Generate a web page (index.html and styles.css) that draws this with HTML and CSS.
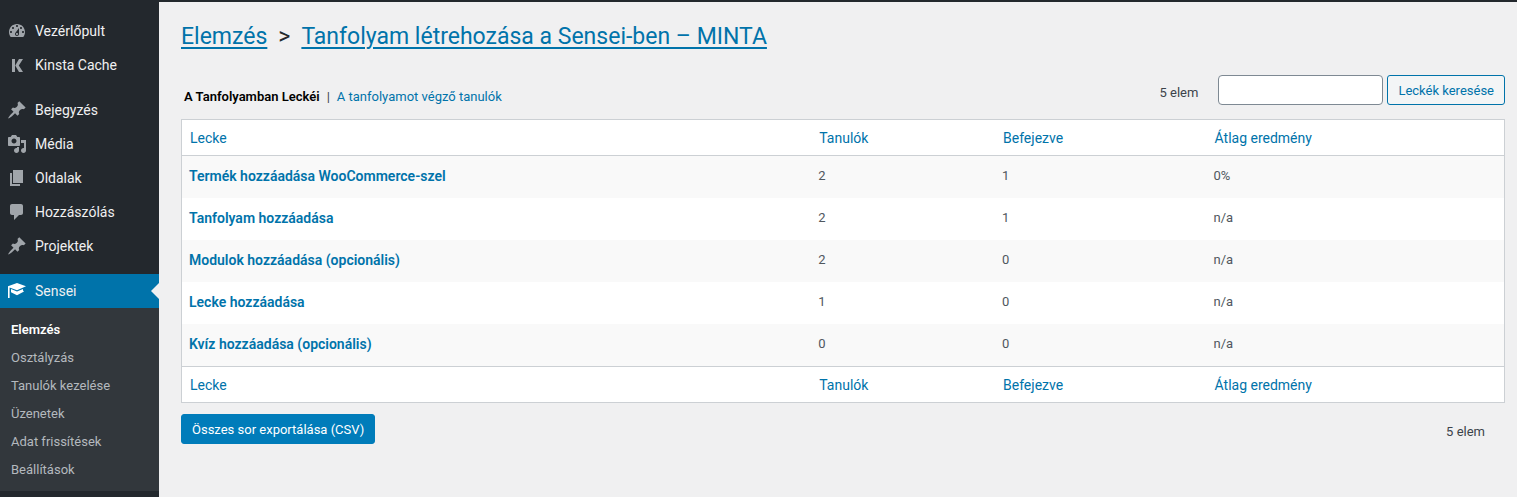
FILE: index.html
```
<!DOCTYPE html>
<html lang="hu">
<head>
    <meta charset="UTF-8">
    <title>Elemzés</title>
    <link rel="stylesheet" href="styles.css">
</head>
<body>
<svg class="sprite">
    <symbol id="pin" viewBox="0 0 20 20"><path d="M10.44 3.02l1.82-1.82 6.36 6.35-1.83 1.82c-1.05-.68-2.48-.57-3.41.36l-.75.75c-.92.93-1.04 2.35-.35 3.41l-1.83 1.82-2.41-2.41-2.8 2.79c-.42.42-3.38 2.71-3.8 2.29s1.86-3.39 2.28-3.81l2.79-2.79L4.1 9.36l1.83-1.82c1.05.69 2.48.57 3.4-.36l.75-.75c.93-.92 1.05-2.35.36-3.41z"/></symbol>
</svg>
<div class="topbar"></div>
<div class="wrap">
    <div class="sidebar">
        <ul class="menu">
            <li><a href="#">
                <svg class="icon" viewBox="0 0 20 20"><path fill-rule="evenodd" d="M3.76 16h12.48c1.1-1.37 1.76-3.11 1.76-5 0-4.42-3.58-8-8-8s-8 3.58-8 8c0 1.89.66 3.63 1.76 5zM10 4c.55 0 1 .45 1 1s-.45 1-1 1-1-.45-1-1 .45-1 1-1zM6 6c.55 0 1 .45 1 1s-.45 1-1 1-1-.45-1-1 .45-1 1-1zm8 0c.55 0 1 .45 1 1s-.45 1-1 1-1-.45-1-1 .45-1 1-1zm-5.37 5.55L12 7v6c0 1.1-.9 2-2 2s-2-.9-2-2c0-.57.24-1.08.63-1.45zM4 10c.55 0 1 .45 1 1s-.45 1-1 1-1-.45-1-1 .45-1 1-1zm12 0c.55 0 1 .45 1 1s-.45 1-1 1-1-.45-1-1 .45-1 1-1zm-5 3c0-.55-.45-1-1-1s-1 .45-1 1 .45 1 1 1 1-.45 1-1z"/></svg>
                Vezérlőpult</a></li>
            <li><a href="#">
                <svg class="icon" viewBox="0 0 20 20"><path d="M5 4h3v13H5zM12 4h4l-4.200 6.500L16 17h-4l-3.800-6.500z"/></svg>
                Kinsta Cache</a></li>
            <li class="group"><a href="#">
                <svg class="icon"><use href="#pin"/></svg>
                Bejegyzés</a></li>
            <li><a href="#">
                <svg class="icon" viewBox="0 0 20 20"><path fill-rule="evenodd" d="M13 11V4c0-.55-.45-1-1-1h-1.67L9 1H5L3.67 3H2c-.55 0-1 .45-1 1v7c0 .55.45 1 1 1h10c.55 0 1-.45 1-1zM7 4.5c1.38 0 2.5 1.12 2.5 2.5S8.38 9.5 7 9.5 4.5 8.38 4.5 7 5.62 4.5 7 4.5zM14 6h5v10.5c0 1.38-1.12 2.5-2.5 2.5S14 17.88 14 16.5s1.12-2.5 2.5-2.5c.17 0 .34.02.5.05V9h-3V6zm-4 8.05V13h2v3.5c0 1.38-1.12 2.5-2.5 2.5S7 17.88 7 16.5 8.12 14 9.5 14c.17 0 .34.02.5.05z"/></svg>
                Média</a></li>
            <li><a href="#">
                <svg class="icon" viewBox="0 0 20 20"><path d="M6 15V2h10v13H6zm-1 1h8v2H3V5h2v11z"/></svg>
                Oldalak</a></li>
            <li><a href="#">
                <svg class="icon" viewBox="0 0 20 20"><path d="M5 2h9c1.1 0 2 .9 2 2v7c0 1.1-.9 2-2 2h-2l-5 5v-5H5c-1.1 0-2-.9-2-2V4c0-1.1.9-2 2-2z"/></svg>
                Hozzászólás</a></li>
            <li><a href="#">
                <svg class="icon"><use href="#pin"/></svg>
                Projektek</a></li>
            <li class="group current"><a href="#">
                <svg class="icon" viewBox="0 0 20 20"><path d="M1 5.200L10 2l9 3.200-9 4L2.600 6.400V17H1zM4 8l6 2.400L16 8v1.600l1 .8-7 3.800-6-3z"/></svg>
                Sensei</a></li>
        </ul>
        <ul class="submenu">
            <li><a class="active" href="#">Elemzés</a></li>
            <li><a href="#">Osztályzás</a></li>
            <li><a href="#">Tanulók kezelése</a></li>
            <li><a href="#">Üzenetek</a></li>
            <li><a href="#">Adat frissítések</a></li>
            <li><a href="#">Beállítások</a></li>
        </ul>
    </div>
    <div class="content">
        <h1><a href="#">Elemzés</a><span class="gt">&gt;</span><a href="#">Tanfolyam létrehozása a Sensei-ben – MINTA</a></h1>
        <div class="tools">
            <div class="views">
                <a class="on" href="#">A Tanfolyamban Leckéi</a><span class="bar">|</span><a href="#">A tanfolyamot végző tanulók</a>
            </div>
            <form class="search">
                <span class="count">5 elem</span>
                <input type="search" aria-label="Leckék keresése">
                <button type="submit">Leckék keresése</button>
            </form>
        </div>
        <table>
            <colgroup><col class="c1"><col class="c2"><col class="c3"><col class="c4"></colgroup>
            <thead>
            <tr><th><a href="#">Lecke</a></th><th><a href="#">Tanulók</a></th><th><a href="#">Befejezve</a></th><th><a href="#">Átlag eredmény</a></th></tr>
            </thead>
            <tbody>
            <tr><td><a href="#">Termék hozzáadása WooCommerce-szel</a></td><td>2</td><td>1</td><td>0%</td></tr>
            <tr><td><a href="#">Tanfolyam hozzáadása</a></td><td>2</td><td>1</td><td>n/a</td></tr>
            <tr><td><a href="#">Modulok hozzáadása (opcionális)</a></td><td>2</td><td>0</td><td>n/a</td></tr>
            <tr><td><a href="#">Lecke hozzáadása</a></td><td>1</td><td>0</td><td>n/a</td></tr>
            <tr><td><a href="#">Kvíz hozzáadása (opcionális)</a></td><td>0</td><td>0</td><td>n/a</td></tr>
            </tbody>
            <tfoot>
            <tr><th><a href="#">Lecke</a></th><th><a href="#">Tanulók</a></th><th><a href="#">Befejezve</a></th><th><a href="#">Átlag eredmény</a></th></tr>
            </tfoot>
        </table>
        <div class="bottom">
            <button class="primary" type="button">Összes sor exportálása (CSV)</button>
            <span class="count">5 elem</span>
        </div>
    </div>
</div>
</body>
</html>
```
FILE: styles.css
```
* {
    margin: 0;
    padding: 0;
    box-sizing: border-box;
}

body {
    background: #f0f0f1;
    color: #3c434a;
    font-family: Roboto, "Liberation Sans", sans-serif;
    font-size: 13px;
    line-height: 18px;
}

ul {
    list-style: none;
}

a {
    color: #0073aa;
    text-decoration: none;
}

.sprite {
    display: none;
}

.topbar {
    height: 2px;
    background: #23282d;
}

.wrap {
    display: flex;
    min-height: calc(100vh - 2px);
}

/* sidebar */
.sidebar {
    flex: none;
    width: 159px;
    padding-top: 12px;
    background: #23282d;
}

.menu a {
    display: flex;
    align-items: center;
    gap: 8px;
    height: 34px;
    padding-left: 7px;
    color: #f0f0f1;
    font-size: 14px;
}

.menu .group {
    margin-top: 11px;
}

.icon {
    width: 20px;
    height: 20px;
    fill: #a0a5aa;
}

.current {
    position: relative;
    background: #0073aa;
}

.current .icon {
    fill: #fff;
}

/* arrow pointing at the page */
.current:after {
    content: "";
    position: absolute;
    right: 0;
    top: 9px;
    border: 8px solid transparent;
    border-left: 0;
    border-right-color: #f0f0f1;
}

.submenu {
    padding: 8px 0 7px;
    background: #32373c;
}

.submenu a {
    display: block;
    padding: 5px 11px;
    color: #b4b9be;
}

.submenu .active {
    color: #fff;
    font-weight: 600;
}

/* page */
.content {
    flex: 1;
    padding: 19px 12px 0 22px;
}

h1 {
    font-size: 23px;
    font-weight: 400;
    line-height: 32px;
    color: #23282d;
}

h1 a {
    text-decoration: underline;
    text-decoration-thickness: 2px;
    text-underline-offset: 3px;
}

.gt {
    margin: 0 11px;
}

.tools {
    display: flex;
    justify-content: space-between;
    margin-top: 22px;
    height: 44px;
}

.views {
    padding: 13px 0 0 3px;
}

.views .on {
    color: #000;
    font-weight: 600;
}

.bar {
    margin: 0 7px;
}

.search {
    display: flex;
    align-items: flex-start;
}

.search .count {
    margin: 9px 20px 0 0;
}

input {
    width: 165px;
    height: 30px;
    margin-right: 4px;
    padding: 0 8px;
    border: 1px solid #7e8993;
    border-radius: 4px;
    background: #fff;
    font: inherit;
}

button {
    height: 30px;
    padding: 2px 10px 0;
    border: 1px solid #0073aa;
    border-radius: 3px;
    background: #f3f5f6;
    color: #0073aa;
    font: inherit;
}

.primary {
    background: #007cba;
    border-color: #007cba;
    color: #fff;
}

table {
    width: 100%;
    table-layout: fixed;
    border: 1px solid #ccd0d4;
    border-spacing: 0;
    background: #fff;
}

.c1 {
    width: 47.6%;
}

.c2 {
    width: 13.9%;
}

.c3 {
    width: 16%;
}

th,
td {
    padding: 0 8px;
    text-align: left;
}

th {
    height: 36px;
    font-size: 14px;
    font-weight: 400;
}

thead th {
    border-bottom: 1px solid #ccd0d4;
}

tfoot th {
    border-top: 1px solid #ccd0d4;
}

td {
    height: 42px;
    padding: 0 7px 2px;
    color: #50575e;
}

td a {
    font-size: 14px;
    font-weight: 600;
}

tbody tr:nth-child(odd) {
    background: #f9f9f9;
}

.bottom {
    display: flex;
    justify-content: space-between;
    padding: 11px 20px 0 0;
}

.bottom .count {
    padding-top: 9px;
}
```
